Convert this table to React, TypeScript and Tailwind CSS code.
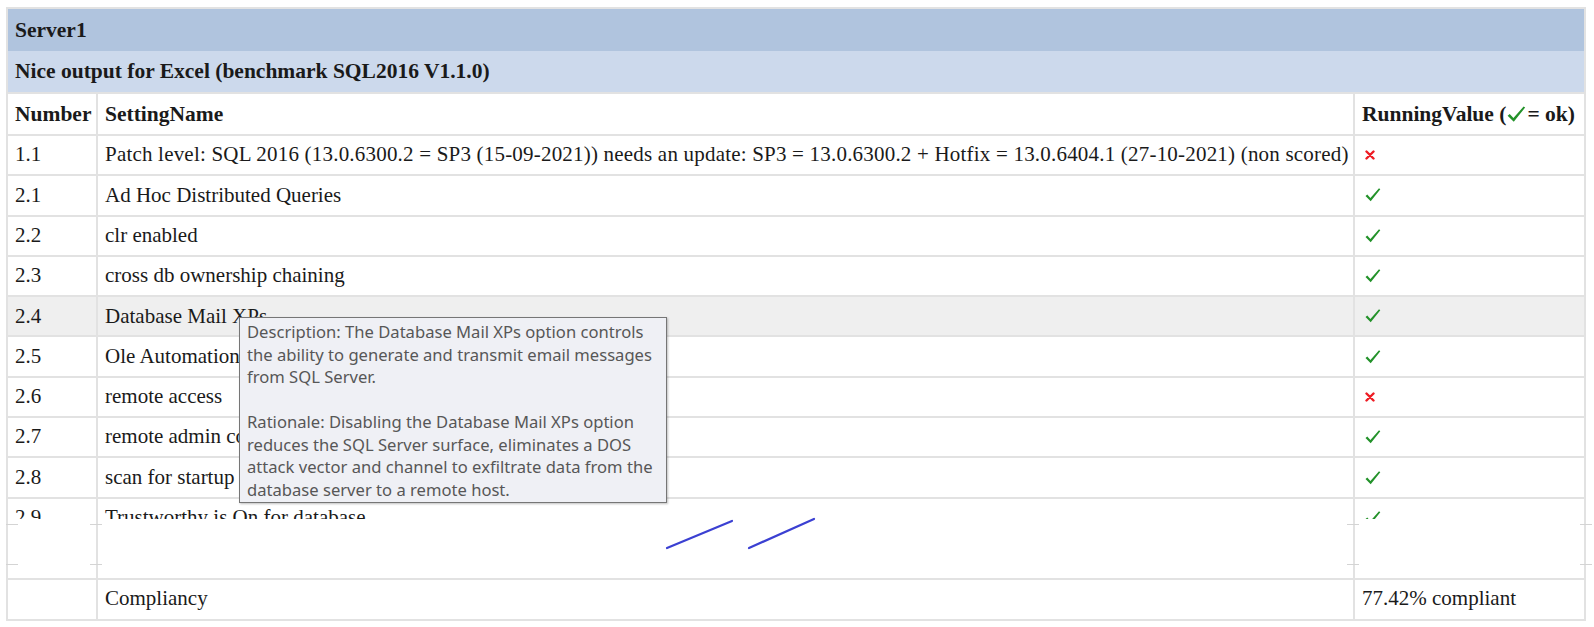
import React from 'react';

type Row = { num: string; name: string; ok: boolean; hover?: boolean };

const rows: Row[] = [
  {
    num: '1.1',
    name: 'Patch level: SQL 2016 (13.0.6300.2 = SP3 (15-09-2021)) needs an update: SP3 = 13.0.6300.2 + Hotfix = 13.0.6404.1 (27-10-2021) (non scored)',
    ok: false,
  },
  { num: '2.1', name: 'Ad Hoc Distributed Queries', ok: true },
  { num: '2.2', name: 'clr enabled', ok: true },
  { num: '2.3', name: 'cross db ownership chaining', ok: true },
  { num: '2.4', name: 'Database Mail XPs', ok: true, hover: true },
  { num: '2.5', name: 'Ole Automation Procedures', ok: true },
  { num: '2.6', name: 'remote access', ok: false },
  { num: '2.7', name: 'remote admin connections', ok: true },
  { num: '2.8', name: 'scan for startup procs', ok: true },
];

const tooltip = `Description: The Database Mail XPs option controls
the ability to generate and transmit email messages
from SQL Server.

Rationale: Disabling the Database Mail XPs option
reduces the SQL Server surface, eliminates a DOS
attack vector and channel to exfiltrate data from the
database server to a remote host.`;

const Check: React.FC<{ size?: number }> = ({ size = 16 }) => (
  <svg width={size} height={size} viewBox="0 0 16 16" className="inline-block">
    <path d="M0.5 9 L2.3 7.6 L5.4 11 L14 1.2 L15.3 2.2 L5.7 14.2 Z" fill="#23922a" />
  </svg>
);

const Cross: React.FC = () => (
  <svg width="10" height="10" viewBox="0 0 10 10" className="inline-block">
    <path d="M1.5 1.5 L8.5 8.5 M8.5 1.5 L1.5 8.5" stroke="#ee1c24" strokeWidth="2.4" strokeLinecap="round" />
  </svg>
);

const cell = 'flex items-center px-[7px] border-r-2 border-[#e2e2e2]';

const DataRow: React.FC<{ row: Row }> = ({ row }) => (
  <div className={`flex h-[40.3px] border-b-2 border-[#e2e2e2] ${row.hover ? 'bg-[#efefef]' : 'bg-white'}`}>
    <div className={`${cell} w-[90px] shrink-0`}>{row.num}</div>
    <div className={`${cell} w-[1257px] shrink-0 whitespace-nowrap`}>
      <span className={row.num === '1.1' ? 'tracking-[0.2px]' : ''}>{row.name}</span>
    </div>
    <div className={`${cell} flex-1 pl-[10px]`}>{row.ok ? <Check /> : <Cross />}</div>
  </div>
);

const Tick: React.FC<{ className: string }> = ({ className }) => (
  <div className={`absolute h-[1px] w-[12px] bg-[#d4d4d4] ${className}`} />
);

export default function App() {
  return (
    <div className="w-[1594px] h-[627px] bg-white pt-[7px] pl-[6px] text-[21px] text-[#1a1a1a] font-['Liberation_Serif',serif]">
      <div className="w-[1580px] border-l-2 border-t-2 border-[#e2e2e2]">
        <div className="flex items-center h-[42px] px-[7px] bg-[#b0c4de] text-[21.5px] font-bold border-r-2 border-[#e2e2e2]">Server1</div>
        <div className="flex items-center h-[43px] px-[7px] bg-[#ccd9ec] text-[21.5px] font-bold border-r-2 border-b-2 border-[#e2e2e2]">
          Nice output for Excel (benchmark SQL2016 V1.1.0)
        </div>
        <div className="flex h-[42px] border-b-2 border-[#e2e2e2] text-[21.5px] font-bold">
          <div className={`${cell} w-[90px] shrink-0`}>Number</div>
          <div className={`${cell} w-[1257px] shrink-0`}>SettingName</div>
          <div className={`${cell} flex-1 gap-[1px] whitespace-nowrap`}>
            <span>RunningValue (</span>
            <Check size={19} />
            <span>= ok)</span>
          </div>
        </div>

        <div className="relative">
          {rows.map((r) => (
            <DataRow key={r.num} row={r} />
          ))}

          {/* torn-off part of the page */}
          <div className="h-[20px] overflow-hidden">
            <DataRow row={{ num: '2.9', name: 'Trustworthy is On for database', ok: true }} />
          </div>
          <div className="relative flex h-[61px] border-b-2 border-[#e2e2e2]">
            <div className="w-[90px] shrink-0 border-r-2 border-[#e2e2e2]" />
            <div className="w-[1257px] shrink-0 border-r-2 border-[#e2e2e2]" />
            <div className="flex-1 border-r-2 border-[#e2e2e2]" />
            <Tick className="top-[5px] left-[-2px] w-[6px]" />
            <Tick className="top-[45px] left-[-2px] w-[6px]" />
            <Tick className="top-[5px] left-[82px]" />
            <Tick className="top-[45px] left-[82px]" />
            <Tick className="top-[5px] left-[1339px]" />
            <Tick className="top-[45px] left-[1339px]" />
            <Tick className="top-[5px] left-[1572px] w-[8px]" />
            <Tick className="top-[45px] left-[1572px] w-[8px]" />
            <svg className="absolute left-[657px] top-[-3px]" width="170" height="36" viewBox="0 0 170 36">
              <path d="M2 32 L67 5" stroke="#3b40d2" strokeWidth="2.2" strokeLinecap="round" />
              <path d="M84 32 L149 3" stroke="#3b40d2" strokeWidth="2.2" strokeLinecap="round" />
            </svg>
          </div>

          <div className="absolute left-[231px] top-[181px] w-[428px] h-[186px] bg-[#eff0f5] border border-[#767676] shadow-[1px_1px_2px_rgba(0,0,0,0.25)] px-[7px] pt-[3px] text-[16.6px] leading-[22.5px] text-[#575757] whitespace-pre-line font-['Noto_Sans',sans-serif]">
            {tooltip}
          </div>
        </div>

        <div className="flex h-[41px] border-b-2 border-[#e2e2e2]">
          <div className={`${cell} w-[90px] shrink-0`} />
          <div className={`${cell} w-[1257px] shrink-0`}>Compliancy</div>
          <div className={`${cell} flex-1`}>77.42% compliant</div>
        </div>
      </div>
    </div>
  );
}
